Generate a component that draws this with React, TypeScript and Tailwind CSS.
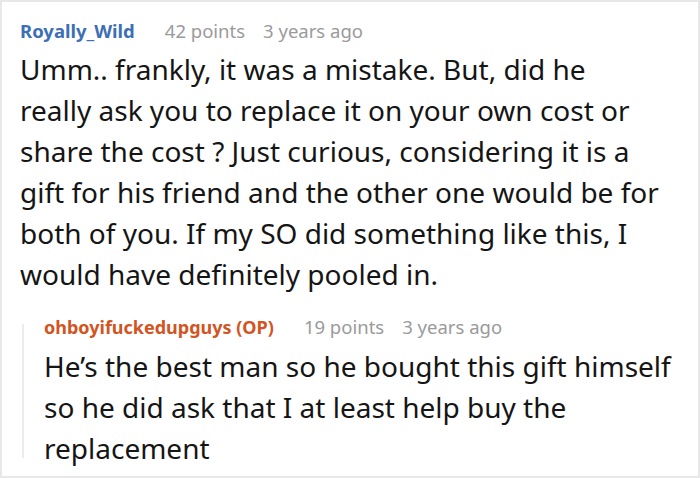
import React from 'react';

const Meta: React.FC<{ name: string; nameClass: string; points: string; age: string }> = ({ name, nameClass, points, age }) => (
  <div className="flex items-baseline text-[18.5px] leading-[24px]">
    <span className={`font-bold ${nameClass}`}>{name}</span>
    <span className="ml-[30px] text-[#9a9a9a]">{points}</span>
    <span className="ml-[18px] text-[#9a9a9a]">{age}</span>
  </div>
);

export default function App() {
  return (
    <div
      className="w-[700px] h-[478px] bg-white border-2 border-[#e8e8e8] pl-[18px] pr-[2px] pt-[17px] text-[#151515]"
      style={{ fontFamily: '"Noto Sans", "Open Sans", sans-serif' }}
    >
      <Meta name="Royally_Wild" nameClass="text-[#3d6fb7]" points="42 points" age="3 years ago" />
      <p className="mt-[6px] whitespace-nowrap text-[28px] leading-[41px]">
        Umm.. frankly, it was a mistake. But, did he
        <br />
        really ask you to replace it on your own cost or
        <br />
        share the cost ? Just curious, considering it is a
        <br />
        gift for his friend and the other one would be for
        <br />
        both of you. If my SO did something like this, I
        <br />
        would have definitely pooled in.
      </p>
      <div className="mt-[20px] ml-[2px] flex">
        <div className="w-[2px] shrink-0 bg-[#ececec] mt-[9px] mb-[11px]" />
        <div className="pl-[20px]">
          <Meta name="ohboyifuckedupguys (OP)" nameClass="text-[#d2541f] text-[18px]" points="19 points" age="3 years ago" />
          <p className="mt-[7px] whitespace-nowrap text-[28px] leading-[41px]">
            He’s the best man so he bought this gift himself
            <br />
            so he did ask that I at least help buy the
            <br />
            replacement
          </p>
        </div>
      </div>
    </div>
  );
}
